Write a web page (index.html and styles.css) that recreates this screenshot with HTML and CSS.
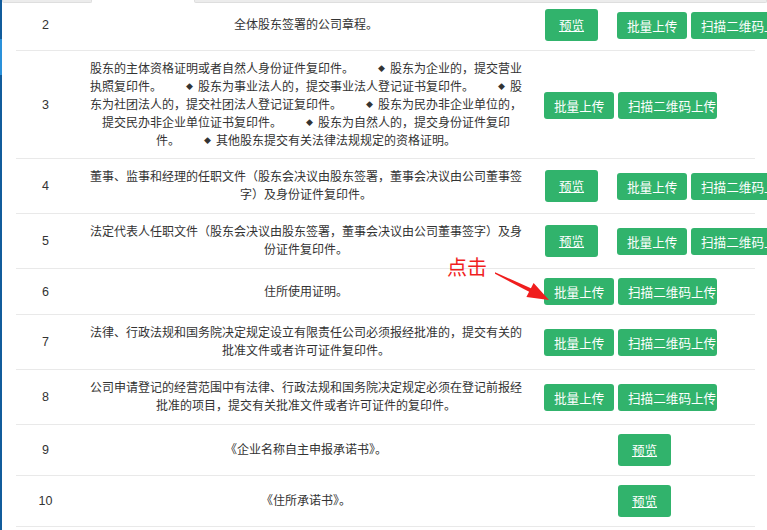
FILE: index.html
```html
<!DOCTYPE html>
<html lang="zh-CN">
<head>
    <meta charset="UTF-8">
    <title>材料清单</title>
    <link rel="stylesheet" href="styles.css">
</head>
<body>
    <div class="page">
        <div class="sidebar"><div class="sidebar-mark"></div></div>

        <div class="main">
            <div class="tabbar">
                <span class="tab"></span>
                <span class="tab active"></span>
                <span class="tab rest"></span>
            </div>

            <table class="doc-table">
                <colgroup>
                    <col class="col-no">
                    <col class="col-desc">
                    <col class="col-act">
                </colgroup>
                <tbody>
                    <tr class="first">
                        <td class="no">2</td>
                        <td class="desc">全体股东签署的公司章程。</td>
                        <td class="act">
                            <div class="actions">
                                <a class="btn btn-preview gap-after" href="#">预览</a>
                                <button class="btn btn-upload">批量上传</button>
                                <button class="btn btn-scan">扫描二维码上传</button>
                            </div>
                        </td>
                    </tr>
                    <tr class="tall">
                        <td class="no">3</td>
                        <td class="desc">股东的主体资格证明或者自然人身份证件复印件。<span class="bullet">◆</span>股东为企业的，提交营业<br>执照复印件。<span class="bullet">◆</span>股东为事业法人的，提交事业法人登记证书复印件。<span class="bullet">◆</span>股<br>东为社团法人的，提交社团法人登记证复印件。<span class="bullet">◆</span>股东为民办非企业单位的，<br>提交民办非企业单位证书复印件。<span class="bullet">◆</span>股东为自然人的，提交身份证件复印<br>件。<span class="bullet">◆</span>其他股东提交有关法律法规规定的资格证明。</td>
                        <td class="act">
                            <div class="actions">
                                <button class="btn btn-upload">批量上传</button>
                                <button class="btn btn-scan">扫描二维码上传</button>
                            </div>
                        </td>
                    </tr>
                    <tr>
                        <td class="no">4</td>
                        <td class="desc">董事、监事和经理的任职文件（股东会决议由股东签署，董事会决议由公司董事签<br>字）及身份证件复印件。</td>
                        <td class="act">
                            <div class="actions">
                                <a class="btn btn-preview gap-after" href="#">预览</a>
                                <button class="btn btn-upload">批量上传</button>
                                <button class="btn btn-scan">扫描二维码上传</button>
                            </div>
                        </td>
                    </tr>
                    <tr>
                        <td class="no">5</td>
                        <td class="desc">法定代表人任职文件（股东会决议由股东签署，董事会决议由公司董事签字）及身<br>份证件复印件。</td>
                        <td class="act">
                            <div class="actions">
                                <a class="btn btn-preview gap-after" href="#">预览</a>
                                <button class="btn btn-upload">批量上传</button>
                                <button class="btn btn-scan">扫描二维码上传</button>
                            </div>
                        </td>
                    </tr>
                    <tr>
                        <td class="no">6</td>
                        <td class="desc">住所使用证明。</td>
                        <td class="act">
                            <div class="actions">
                                <button class="btn btn-upload">批量上传</button>
                                <button class="btn btn-scan">扫描二维码上传</button>
                            </div>
                        </td>
                    </tr>
                    <tr>
                        <td class="no">7</td>
                        <td class="desc">法律、行政法规和国务院决定规定设立有限责任公司必须报经批准的，提交有关的<br>批准文件或者许可证件复印件。</td>
                        <td class="act">
                            <div class="actions">
                                <button class="btn btn-upload">批量上传</button>
                                <button class="btn btn-scan">扫描二维码上传</button>
                            </div>
                        </td>
                    </tr>
                    <tr>
                        <td class="no">8</td>
                        <td class="desc">公司申请登记的经营范围中有法律、行政法规和国务院决定规定必须在登记前报经<br>批准的项目，提交有关批准文件或者许可证件的复印件。</td>
                        <td class="act">
                            <div class="actions">
                                <button class="btn btn-upload">批量上传</button>
                                <button class="btn btn-scan">扫描二维码上传</button>
                            </div>
                        </td>
                    </tr>
                    <tr>
                        <td class="no">9</td>
                        <td class="desc">《企业名称自主申报承诺书》。</td>
                        <td class="act">
                            <div class="actions preview-only">
                                <a class="btn btn-preview" href="#">预览</a>
                            </div>
                        </td>
                    </tr>
                    <tr>
                        <td class="no">10</td>
                        <td class="desc">《住所承诺书》。</td>
                        <td class="act">
                            <div class="actions preview-only">
                                <a class="btn btn-preview" href="#">预览</a>
                            </div>
                        </td>
                    </tr>
                </tbody>
            </table>

            <!-- annotation from the screenshot -->
            <div class="hint">点击</div>
            <svg class="hint-arrow" width="70" height="40" viewBox="0 0 70 40">
                <polygon points="5,7.2 40.9,23.2 43.6,17.9 59,35 36.4,32.1 39.1,26.8 5,8.8" fill="#f01e1e"/>
            </svg>
        </div>
    </div>
</body>
</html>
```

FILE: styles.css
```css
* {
    margin: 0;
    padding: 0;
    box-sizing: border-box;
}

html, body {
    height: 100%;
}

body {
    background-color: #fff;
    color: #333;
    font-family: "Liberation Sans", "Noto Sans CJK SC", sans-serif;
    font-size: 12px;
    overflow: hidden;
}

.page {
    display: flex;
    height: 100%;
}

.sidebar {
    width: 2px;
    flex-shrink: 0;
    background-color: #115c9c;
}

.sidebar-mark {
    margin-top: 39px;
    height: 36px;
    background-color: #2a91da;
}

.main {
    position: relative;
    flex: 1;
    min-width: 0;
}

/* bottom edge of the tabs above */
.tabbar {
    display: flex;
    height: 3px;
}

.tab {
    width: 90px;
    background-color: #ececec;
    border: 1px solid #dedede;
    border-top: none;
    border-radius: 0 0 2px 2px;
}

.tab.active {
    width: 102px;
    background-color: #fff;
    border: none;
}

.tab.rest {
    flex: 1;
}

.doc-table {
    width: 739px;
    margin-left: 14px;
    border-collapse: collapse;
    table-layout: fixed;
}

.col-no {
    width: 59px;
}

.col-desc {
    width: 462px;
}

.col-act {
    width: 218px;
}

.doc-table td {
    padding: 9px 8px;
    line-height: 18px;
    border-bottom: 1px solid #e9e9e9;
    vertical-align: middle;
}

.doc-table tr.first td {
    padding-top: 6px;
}

.doc-table tr.tall td {
    padding-bottom: 8px;
}

.doc-table td.no {
    text-align: center;
    font-size: 12.5px;
}

.doc-table td.desc {
    text-align: center;
    white-space: nowrap;
}

.doc-table td.act {
    padding-left: 7px;
    padding-right: 0;
}

.bullet {
    display: inline-block;
    width: 36px;
    padding-right: 5px;
    text-align: right;
    font-size: 7px;
    line-height: 18px;
    vertical-align: top;
}

.actions {
    display: flex;
    align-items: center;
    gap: 4px;
    white-space: nowrap;
}

.actions.preview-only {
    padding-left: 74px;
}

.btn {
    display: inline-block;
    height: 27px;
    line-height: 27px;
    background-color: #31b36c;
    color: #fff;
    border: none;
    border-radius: 3px;
    font-family: "Noto Sans CJK SC", sans-serif;
    font-size: 12.6px;
    text-align: left;
    padding-left: 10px;
    overflow: hidden;
    flex-shrink: 0;
    cursor: pointer;
}

.btn-preview {
    width: 53px;
    height: 32px;
    line-height: 32px;
    padding-left: 0;
    text-align: center;
    text-decoration: underline;
}

.btn-preview.gap-after {
    margin-left: 1px;
    margin-right: 15px;
}

.btn-upload {
    width: 70px;
}

.btn-scan {
    width: 99px;
}

.hint {
    position: absolute;
    left: 445px;
    top: 255px;
    color: #f01e1e;
    font-family: "Noto Sans CJK SC", sans-serif;
    font-size: 20px;
    line-height: 24px;
}

.hint-arrow {
    position: absolute;
    left: 488px;
    top: 265px;
}
```
